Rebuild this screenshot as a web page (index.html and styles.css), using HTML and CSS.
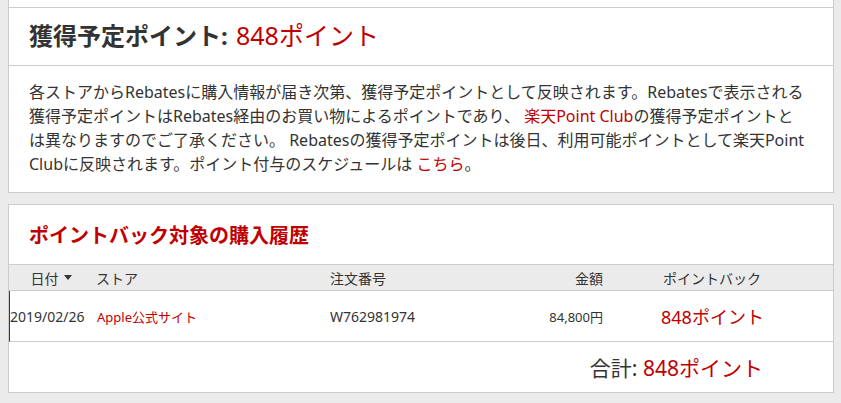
FILE: index.html
```html
<!DOCTYPE html>
<html lang="ja">
<head>
<meta charset="utf-8">
<link rel="stylesheet" href="styles.css">
</head>
<body>
<div class="page">
  <section class="card card-summary">
    <div class="card-top"></div>
    <h1 class="summary-title">獲得予定ポイント: <span class="red title-points">848ポイント</span></h1>
    <p class="summary-body">各ストアからRebatesに購入情報が届き次第、獲得予定ポイントとして反映されます。Rebatesで表示される<br>獲得予定ポイントはRebates経由のお買い物によるポイントであり、 <span class="red">楽天Point Club</span>の獲得予定ポイントと<br>は異なりますのでご了承ください。 Rebatesの獲得予定ポイントは後日、利用可能ポイントとして楽天Point<br>Clubに反映されます。ポイント付与のスケジュールは <span class="red">こちら</span>。</p>
  </section>
  <section class="card card-history">
    <h2 class="history-title">ポイントバック対象の購入履歴</h2>
    <div class="table">
      <div class="row head">
        <div class="cell c-date">日付<span class="caret"></span></div>
        <div class="cell c-store">ストア</div>
        <div class="cell c-order">注文番号</div>
        <div class="cell c-amount">金額</div>
        <div class="cell c-points">ポイントバック</div>
      </div>
      <div class="row data">
        <div class="cell c-date">2019/02/26</div>
        <div class="cell c-store red">Apple公式サイト</div>
        <div class="cell c-order">W762981974</div>
        <div class="cell c-amount">84,800円</div>
        <div class="cell c-points red big">848ポイント</div>
      </div>
    </div>
    <div class="total"><span class="total-text">合計: <span class="red">848ポイント</span></span></div>
  </section>
</div>
</body>
</html>
```
FILE: styles.css
```css
html, body {
  margin: 0;
  padding: 0;
}
body {
  background: #ebebeb;
  color: #333;
  font-family: "Noto Sans", "Noto Sans CJK JP", sans-serif;
}
.page {
  padding: 0 7px 0 8px;
  display: flex;
  flex-direction: column;
  gap: 11px;
}
.card {
  background: #fff;
  border: 1px solid #ccc;
}
.card-summary {
  border-top: none;
}
.card-top {
  height: 7px;
  border-bottom: 1px solid #ccc;
}
.red {
  color: #c00000;
}
.summary-title {
  margin: 0;
  height: 58px;
  box-sizing: border-box;
  display: flex;
  align-items: center;
  padding-left: 20px;
  padding-bottom: 5px;
  font-size: 24px;
  font-weight: bold;
  border-bottom: 1px solid #ccc;
  white-space: pre;
}
.title-points {
  font-weight: normal;
  font-size: 25px;
  margin-left: 2px;
}
.summary-body {
  margin: 0;
  padding: 14px 10px 16px 20px;
  font-size: 16px;
  line-height: 24px;
  white-space: nowrap;
}
.history-title {
  margin: 0;
  height: 59px;
  display: flex;
  align-items: center;
  padding-left: 20px;
  font-size: 20px;
  font-weight: bold;
  color: #c00000;
  border-bottom: 1px solid #ccc;
}
.row {
  display: grid;
  grid-template-columns: 84px 234px 156px 123px 1fr;
  align-items: center;
  border-bottom: 1px solid #ccc;
}
.row.head {
  height: 25px;
  background: #ebebeb;
  font-size: 14px;
}
.row.data {
  height: 50px;
  font-size: 13px;
  border-left: 1px solid #c00000;
  grid-template-columns: 83px 234px 156px 123px 1fr;
}
.cell {
  white-space: nowrap;
}
.head .c-date {
  display: flex;
  align-items: center;
  justify-content: center;
}
.data .c-date,
.data .c-order {
  font-size: 14px;
}
.c-store, .c-order {
  padding-left: 3px;
}
.data .c-store {
  padding-left: 4px;
}
.c-amount {
  text-align: right;
  padding-right: 3px;
}
.c-points {
  padding-left: 57px;
}
.data .c-points {
  padding-left: 55px;
}
.big {
  font-size: 18px;
}
.caret {
  display: inline-block;
  width: 0;
  height: 0;
  margin-left: 5px;
  border-left: 4px solid transparent;
  border-right: 4px solid transparent;
  border-top: 5px solid #333;
}
.total {
  height: 50px;
  display: flex;
  align-items: center;
  justify-content: flex-end;
  padding-right: 70px;
  font-size: 21px;
}
```
